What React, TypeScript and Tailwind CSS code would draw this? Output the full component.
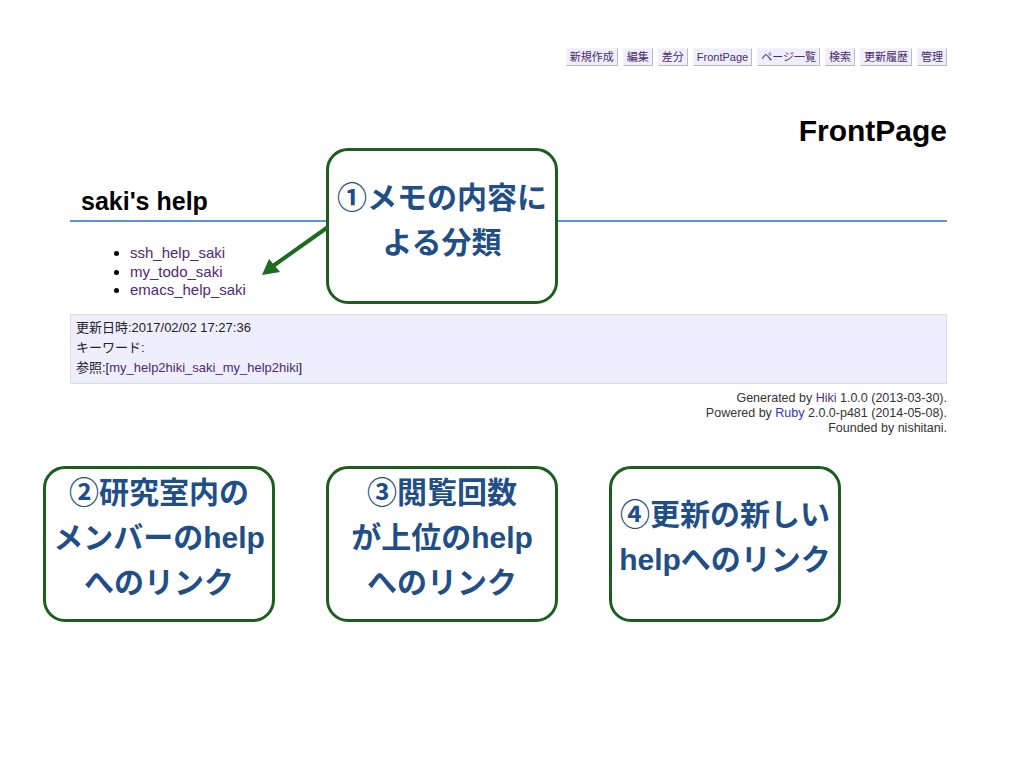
import React from 'react';

const navItems = ['新規作成', '編集', '差分', 'FrontPage', 'ページ一覧', '検索', '更新履歴', '管理'];
const pages = ['ssh_help_saki', 'my_todo_saki', 'emacs_help_saki'];

const sans = "font-['Liberation_Sans','Noto_Sans_CJK_JP',sans-serif]";

function Callout({ lines, className = '' }: { lines: string[]; className?: string }) {
    return (
        <div
            className={`w-[232px] h-[156px] rounded-[22px] border-[3px] border-[#1c5e1e] bg-white flex flex-col items-center justify-center pb-[13px] ${className}`}
        >
            {lines.map((line) => (
                <div
                    key={line}
                    className="text-[30px] leading-[45px] font-bold text-[#1f4f86] whitespace-nowrap font-['Liberation_Sans','Noto_Sans_CJK_JP',sans-serif]"
                >
                    {line}
                </div>
            ))}
        </div>
    );
}

export default function App() {
    return (
        <div className={`relative w-[1024px] h-[768px] bg-white overflow-hidden text-[#333] ${sans}`}>
            <div className="ml-[70px] w-[877px] pt-[48px]">
                {/* toolbar */}
                <div className="flex justify-end gap-[5px]">
                    {navItems.map((item) => (
                        <span
                            key={item}
                            className="h-[18px] px-[3px] flex items-center text-[11px] leading-none text-[#4a2d64] bg-[#eeeeff] border border-t-[#f4f4f4] border-l-[#f4f4f4] border-r-[#bbbbbb] border-b-[#bbbbbb]"
                        >
                            {item}
                        </span>
                    ))}
                </div>

                <h1 className="mt-[48px] text-right text-[30px] leading-[34px] font-bold text-black">FrontPage</h1>

                <h2 className="mt-[39px] pl-[11px] pb-[5px] text-[25px] leading-[28px] font-bold text-black border-b-2 border-[#5b93d3]">
                    saki's help
                </h2>

                <ul className="mt-[22px] pl-[60px] list-disc text-[15px] leading-[18.5px] marker:text-black">
                    {pages.map((p) => (
                        <li key={p} className="text-[#4f2a6e]">
                            {p}
                        </li>
                    ))}
                </ul>

                <div className="mt-[14px] h-[70px] bg-[#eeeeff] border border-[#dddddd] px-[5px] pt-[3px] text-[13px] leading-[20px] text-[#222]">
                    <div>更新日時:2017/02/02 17:27:36</div>
                    <div>キーワード:</div>
                    <div>
                        参照:[<span className="text-[#4f2a6e]">my_help2hiki_saki_my_help2hiki</span>]
                    </div>
                </div>

                <div className="mt-[7px] text-right text-[12.5px] leading-[15px] text-[#333]">
                    <div>
                        Generated by <span className="text-[#5a2d7a]">Hiki</span> 1.0.0 (2013-03-30).
                    </div>
                    <div>
                        Powered by <span className="text-[#3333cc]">Ruby</span> 2.0.0-p481 (2014-05-08).
                    </div>
                    <div>Founded by nishitani.</div>
                </div>
            </div>

            {/* bottom annotations */}
            <div className="mt-[30px] ml-[43px] flex gap-[51px]">
                <Callout lines={['②研究室内の', 'メンバーのhelp', 'へのリンク']} />
                <Callout lines={['③閲覧回数', 'が上位のhelp', 'へのリンク']} />
                <Callout lines={['④更新の新しい', 'helpへのリンク']} />
            </div>

            {/* annotation over the page */}
            <Callout lines={['①メモの内容に', 'よる分類']} className="absolute left-[326px] top-[148px]" />
            <svg className="absolute left-[255px] top-[220px]" width="80" height="64" viewBox="0 0 80 64">
                <line x1="73" y1="7" x2="18" y2="46" stroke="#1c6b1e" strokeWidth="4" />
                <polygon points="7,55 14,39 25,52" fill="#1c6b1e" />
            </svg>
        </div>
    );
}
